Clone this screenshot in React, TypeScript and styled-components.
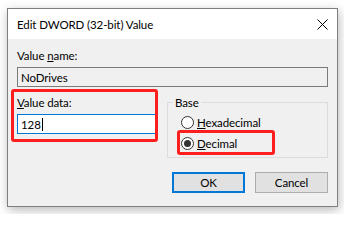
import React from "react";
import styled, { createGlobalStyle } from "styled-components";

const GlobalStyle = createGlobalStyle`
  html, body { margin: 0; padding: 0; background: #ffffff; }
  body {
    font-family: Lato, "Liberation Sans", sans-serif;
    font-size: 11.5px;
    letter-spacing: -0.1px;
    color: #000;
  }
  * { box-sizing: border-box; }
`;

const Page = styled.div`
  width: 344px;
  height: 214px;
  padding: 8px 0 0 7px;
  overflow: hidden;
`;

const Dialog = styled.div`
  width: 331px;
  height: 199px;
  border: 1px solid #7f7f7f;
  background: #f0f0f0;
  display: flex;
  flex-direction: column;
  box-shadow: 1px 3px 10px rgba(0, 0, 0, 0.28);
`;

const TitleBar = styled.div`
  flex: none;
  height: 30px;
  background: #ffffff;
  display: flex;
  align-items: center;
  padding: 0 9px;
`;

const Title = styled.div`
  flex: 1;
  line-height: 15px;
`;

const CloseIcon = styled.svg`
  display: block;
  width: 11px;
  height: 11px;
`;

const Body = styled.div`
  flex: 1;
  display: flex;
  flex-direction: column;
  padding: 9px 9px 0 9px;
`;

const FieldLabel = styled.div`
  line-height: 15px;
  margin-bottom: 4px;
`;

const TextBox = styled.div<{ $focused?: boolean; $readOnly?: boolean }>`
  height: 20px;
  display: flex;
  align-items: center;
  padding-left: 3px;
  border: 1px solid ${(p) => (p.$focused ? "#0078d7" : "#7a7a7a")};
  background: ${(p) => (p.$readOnly ? "#f0f0f0" : "#ffffff")};
  line-height: 15px;
`;

const Caret = styled.span`
  display: inline-block;
  width: 1px;
  height: 13px;
  background: #000;
  margin-left: 1px;
`;

const MiddleRow = styled.div`
  display: grid;
  grid-template-columns: 139px 161px;
  column-gap: 11px;
  align-items: start;
  margin-top: 8px;
`;

const DataColumn = styled.div`
  position: relative;
`;

const Annotation = styled.div<{ $top: number; $left: number; $right: number; $bottom: number }>`
  position: absolute;
  top: ${(p) => p.$top}px;
  left: ${(p) => p.$left}px;
  right: ${(p) => p.$right}px;
  bottom: ${(p) => p.$bottom}px;
  border: 3px solid #ff1e1e;
  border-radius: 3px;
  pointer-events: none;
`;

const GroupBox = styled.fieldset`
  margin: 0;
  padding: 0 0 3px 0;
  border: 1px solid #dcdcdc;
  min-width: 0;
`;

const GroupLegend = styled.legend`
  margin-left: 5px;
  padding: 0 2px;
  line-height: 15px;
`;

const RadioList = styled.div`
  display: flex;
  flex-direction: column;
  margin-top: 2px;
  padding-left: 13px;
`;

const RadioRow = styled.label`
  position: relative;
  height: 21px;
  display: flex;
  align-items: center;
  gap: 3px;
  align-self: flex-start;
`;

const RadioCircle = styled.span<{ $checked?: boolean }>`
  width: 13px;
  height: 13px;
  border-radius: 50%;
  border: 1px solid #333333;
  background: #ffffff;
  display: flex;
  align-items: center;
  justify-content: center;
  flex: none;
  &::after {
    content: "";
    width: 7px;
    height: 7px;
    border-radius: 50%;
    background: #333333;
    display: ${(p) => (p.$checked ? "block" : "none")};
  }
`;

const RowAnnotation = styled.div`
  position: absolute;
  top: -3px;
  left: -4px;
  width: 98px;
  height: 25px;
  border: 3px solid #ff1e1e;
  border-radius: 3px;
  pointer-events: none;
`;

const ButtonRow = styled.div`
  display: flex;
  justify-content: flex-end;
  gap: 10px;
  margin-top: 14px;
`;

const Button = styled.div<{ $primary?: boolean }>`
  width: 73px;
  height: 21px;
  display: flex;
  align-items: center;
  justify-content: center;
  background: #e1e1e1;
  border: ${(p) => (p.$primary ? "2px solid #0078d7" : "1px solid #adadad")};
  line-height: 15px;
`;

export default function App() {
  return (
    <>
      <GlobalStyle />
      <Page>
        <Dialog>
          <TitleBar>
            <Title>Edit DWORD (32-bit) Value</Title>
            <CloseIcon viewBox="0 0 11 11">
              <path d="M0.5 0.5 L10.5 10.5 M10.5 0.5 L0.5 10.5" stroke="#000" strokeWidth="1" fill="none" />
            </CloseIcon>
          </TitleBar>
          <Body>
            <FieldLabel>
              Value <u>n</u>ame:
            </FieldLabel>
            <TextBox $readOnly>NoDrives</TextBox>
            <MiddleRow>
              <DataColumn>
                <FieldLabel>
                  <u>V</u>alue data:
                </FieldLabel>
                <TextBox $focused>
                  128
                  <Caret />
                </TextBox>
                <Annotation $top={-6} $left={-6} $right={-2} $bottom={-8} />
              </DataColumn>
              <GroupBox>
                <GroupLegend>Base</GroupLegend>
                <RadioList>
                  <RadioRow>
                    <RadioCircle />
                    <span>
                      <u>H</u>exadecimal
                    </span>
                  </RadioRow>
                  <RadioRow>
                    <RadioCircle $checked />
                    <span>
                      <u>D</u>ecimal
                    </span>
                    <RowAnnotation />
                  </RadioRow>
                </RadioList>
              </GroupBox>
            </MiddleRow>
            <ButtonRow>
              <Button $primary>OK</Button>
              <Button>Cancel</Button>
            </ButtonRow>
          </Body>
        </Dialog>
      </Page>
    </>
  );
}
